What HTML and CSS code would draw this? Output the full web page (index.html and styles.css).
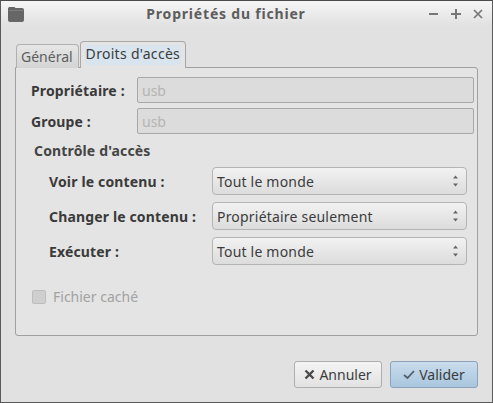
FILE: index.html
```html
<!DOCTYPE html>
<html>
<head>
    <title>Propriétés du fichier</title>
    <link rel="stylesheet" href="styles.css">
</head>
<body>
    <div class="window">
        <div class="titlebar">
            <svg class="app-icon" width="16" height="16" viewBox="0 0 16 16">
                <path d="M0 2.5 Q0 1 1.5 1 H6 Q7 1 7.5 2 H14 Q16 2 16 4 V14 Q16 16 14 16 H2 Q0 16 0 14 Z" fill="#666"/>
                <path d="M1 4 H15 V5 H1 Z" fill="#7d7d7d"/>
            </svg>
            <div class="title">Propriétés du fichier</div>
            <div class="win-buttons">
                <svg width="12" height="12" viewBox="0 0 12 12"><path d="M1 6 H10" stroke="#777" stroke-width="2"/></svg>
                <svg width="12" height="12" viewBox="0 0 12 12"><path d="M1 6 H11 M6 1 V11" stroke="#777" stroke-width="2"/></svg>
                <svg width="12" height="12" viewBox="0 0 12 12"><path d="M2 2 L10 10 M10 2 L2 10" stroke="#777" stroke-width="1.7"/></svg>
            </div>
        </div>
        <div class="content">
            <div class="tabs">
                <div class="tab">Général</div>
                <div class="tab active"><span class="tab-label">Droits d'accès</span></div>
            </div>
            <div class="panel">
                <div class="owner-row">
                    <div class="bold-label">Propriétaire :</div>
                    <div class="entry">usb</div>
                </div>
                <div class="owner-row">
                    <div class="bold-label">Groupe :</div>
                    <div class="entry">usb</div>
                </div>
                <div class="section-title">Contrôle d'accès</div>
                <div class="perm-row">
                    <div class="bold-label">Voir le contenu :</div>
                    <div class="combo"><span>Tout le monde</span><svg width="7" height="14" viewBox="0 0 7 14"><path d="M3.5 1.5 L6 4.5 H1 Z M3.5 12.5 L6 9.5 H1 Z" fill="#666"/></svg></div>
                </div>
                <div class="perm-row">
                    <div class="bold-label">Changer le contenu :</div>
                    <div class="combo"><span>Propriétaire seulement</span><svg width="7" height="14" viewBox="0 0 7 14"><path d="M3.5 1.5 L6 4.5 H1 Z M3.5 12.5 L6 9.5 H1 Z" fill="#666"/></svg></div>
                </div>
                <div class="perm-row">
                    <div class="bold-label">Exécuter :</div>
                    <div class="combo"><span>Tout le monde</span><svg width="7" height="14" viewBox="0 0 7 14"><path d="M3.5 1.5 L6 4.5 H1 Z M3.5 12.5 L6 9.5 H1 Z" fill="#666"/></svg></div>
                </div>
                <div class="check-row">
                    <div class="checkbox"></div>
                    <div class="check-label">Fichier caché</div>
                </div>
            </div>
            <div class="actions">
                <div class="button">
                    <svg width="11" height="11" viewBox="0 0 11 11"><path d="M1.5 1.5 L9.5 9.5 M9.5 1.5 L1.5 9.5" stroke="#4a4a4a" stroke-width="2.4"/></svg>
                    Annuler
                </div>
                <div class="button primary">
                    <svg width="12" height="11" viewBox="0 0 12 11"><path d="M1 6 L4.5 9 L11 2" fill="none" stroke="#4f5f6d" stroke-width="1.8"/></svg>
                    Valider
                </div>
            </div>
        </div>
    </div>
</body>
</html>
```

FILE: styles.css
```css
body {
    margin: 0;
    font-family: "Noto Sans", "Open Sans", sans-serif;
    font-size: 14px;
    color: #3c3c3c;
    background: #e0e0e0;
}
.window {
    width: 493px;
    height: 403px;
    box-sizing: border-box;
    border: 1px solid #5a5a5a;
    border-top-color: #4a4a4a;
    background: #e1e1e1;
    display: flex;
    flex-direction: column;
}
.titlebar {
    height: 25px;
    flex: none;
    display: flex;
    align-items: center;
    padding: 0 8px 0 7px;
    background: linear-gradient(#f6f6f6, #e1e1e1);
    position: relative;
}
.app-icon {
    flex: none;
}
.title {
    flex: 1;
    text-align: center;
    font-size: 14px;
    font-weight: bold;
    color: #5d5d5d;
    letter-spacing: 0.8px;
}
.win-buttons {
    display: flex;
    gap: 10px;
}
.content {
    flex: 1;
    display: flex;
    flex-direction: column;
    padding: 15px 14px 14px 14px;
}
.tabs {
    display: flex;
    align-items: flex-end;
    gap: 1px;
    padding-left: 1px;
    height: 27px;
    position: relative;
    z-index: 1;
    margin-bottom: -1px;
}
.tab {
    height: 24px;
    box-sizing: border-box;
    padding: 3px 5px 0 4px;
    border: 1px solid #b0b0b0;
    border-bottom: none;
    border-radius: 4px 4px 0 0;
    background: linear-gradient(#e6e6e6, #d4d4d4);
    color: #5e5e5e;
    line-height: 18px;
}
.tab.active {
    height: 27px;
    padding: 3px 4px 0 4px;
    background: #e4e4e4;
    border-color: #a8a8a8;
    color: #3c3c3c;
}
.tab-label {
    display: block;
    height: 20px;
    padding: 0 1px;
    background: #d8e4ee;
    border-radius: 2px;
    letter-spacing: 0.3px;
}
.panel {
    height: 269px;
    box-sizing: border-box;
    border: 1px solid #a0a0a0;
    border-radius: 0 3px 3px 3px;
    background: #e4e4e4;
    padding: 9px 3px 0 15px;
}
.owner-row {
    display: flex;
    align-items: center;
    margin-bottom: 5px;
}
.owner-row .bold-label {
    width: 106px;
}
.bold-label {
    font-weight: bold;
    color: #3a3a3a;
    letter-spacing: 0.15px;
}
.entry {
    flex: 1;
    height: 26px;
    box-sizing: border-box;
    border: 1px solid #a8a8a8;
    border-radius: 2px;
    background: #dcdcdc;
    color: #b4b4b4;
    padding-left: 4px;
    line-height: 25px;
}
.section-title {
    font-weight: bold;
    color: #444;
    margin: 7px 0 7px 3px;
    line-height: 19px;
    letter-spacing: 0.15px;
}
.perm-row {
    display: flex;
    align-items: center;
    padding-left: 18px;
    margin-bottom: 7px;
}
.perm-row .bold-label {
    width: 163px;
    white-space: nowrap;
}
.combo {
    width: 255px;
    height: 28px;
    box-sizing: border-box;
    border: 1px solid #b4b4b4;
    border-radius: 4px;
    background: linear-gradient(#f2f2f2, #dcdcdc);
    display: flex;
    align-items: center;
    justify-content: space-between;
    padding: 0 7px 0 4px;
    color: #3c3c3c;
    letter-spacing: 0.2px;
}
.check-row {
    display: flex;
    align-items: center;
    gap: 7px;
    margin-top: 22px;
    padding-left: 1px;
}
.checkbox {
    width: 14px;
    height: 14px;
    box-sizing: border-box;
    border: 1px solid #bdbdbd;
    border-radius: 2px;
    background: #cfcfcf;
}
.check-label {
    color: #a2a2a2;
}
.actions {
    display: flex;
    justify-content: flex-end;
    gap: 8px;
    margin-top: 25px;
}
.button {
    width: 88px;
    height: 27px;
    box-sizing: border-box;
    border: 1px solid #aeaeae;
    border-radius: 3px;
    background: linear-gradient(#f4f4f4, #e2e2e2);
    display: flex;
    align-items: center;
    justify-content: center;
    gap: 4px;
    color: #3c3c3c;
}
.button.primary {
    border-color: #8ba3b8;
    background: linear-gradient(#c9dcec, #a9c6de);
}
```
